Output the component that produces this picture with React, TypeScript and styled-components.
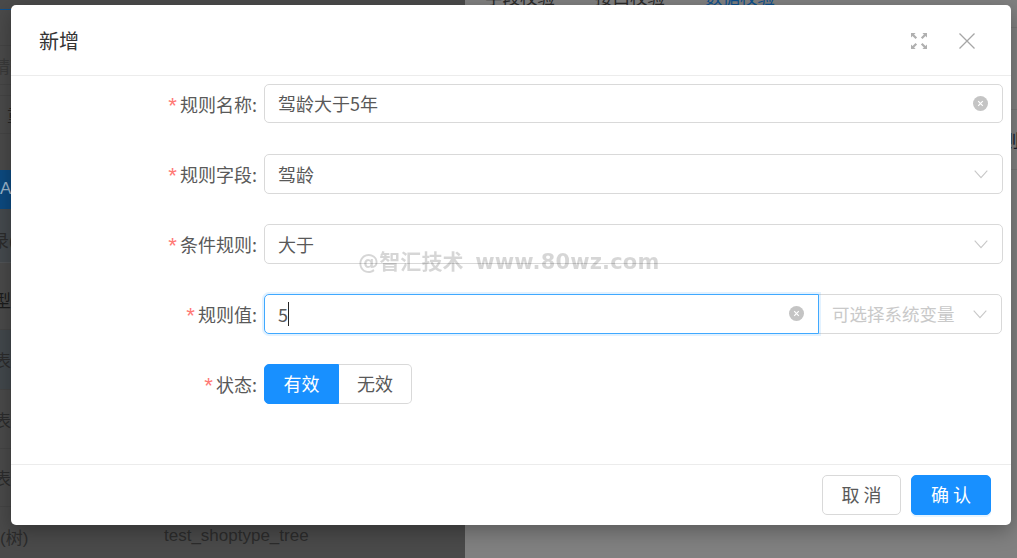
import React from "react";
import styled, { createGlobalStyle } from "styled-components";

const Global = createGlobalStyle`
  html, body { margin: 0; padding: 0; width: 1017px; height: 558px; overflow: hidden; }
  body { font-family: "Noto Sans CJK SC", "Liberation Sans", sans-serif; }
  #root { width: 1017px; height: 558px; }
`;

const Page = styled.div`
  position: relative;
  display: flex;
  width: 1017px;
  height: 558px;
  overflow: hidden;
`;

const LeftPanel = styled.div`
  width: 465px;
  flex: none;
  display: flex;
  flex-direction: column;
  background: #4a4a4a;
  overflow: hidden;
`;

const RightPanel = styled.div`
  flex: 1;
  background: #808080;
  display: flex;
  flex-direction: column;
  overflow: hidden;
`;

const BackRow = styled.div<{ $h: number; $bg?: string; $line?: string; $color?: string; $top?: number }>`
  height: ${(p) => p.$h}px;
  flex: none;
  box-sizing: border-box;
  display: flex;
  align-items: center;
  white-space: nowrap;
  font-family: "Liberation Sans", "Noto Sans CJK SC", sans-serif;
  font-size: 17px;
  background: ${(p) => p.$bg || "transparent"};
  border-bottom: 1px solid ${(p) => p.$line || "#444444"};
  color: ${(p) => p.$color || "#262626"};
  padding-top: ${(p) => p.$top || 0}px;
`;

const BackCell = styled.span<{ $w?: number; $x?: number }>`
  display: block;
  flex: none;
  width: ${(p) => p.$w || 83}px;
  margin-left: ${(p) => p.$x || 0}px;
`;

const TabStrip = styled.div`
  display: flex;
  gap: 40px;
  flex: none;
  box-sizing: border-box;
  padding-left: 20px;
  border-bottom: 1px solid #777777;
  font-size: 17.5px;
  line-height: 17.5px;
  margin-top: -12px;
  height: 40px;
`;

const BackTab = styled.span<{ $active?: boolean }>`
  color: ${(p) => (p.$active ? "#0c4f8c" : "#2a2a2a")};
`;

const RightRow = styled.div<{ $h: number }>`
  height: ${(p) => p.$h}px;
  flex: none;
  box-sizing: border-box;
  border-bottom: 1px solid #777777;
  display: flex;
  align-items: center;
  font-size: 17.5px;
  padding-left: 537px;
  color: #14182a;
  white-space: nowrap;
`;

const Modal = styled.div`
  position: absolute;
  left: 11px;
  top: 5px;
  width: 1000px;
  height: 520px;
  background: #fff;
  border-radius: 5px;
  box-shadow: 0 6px 20px rgba(0, 0, 0, 0.3);
  display: flex;
  flex-direction: column;
`;

const Header = styled.div`
  height: 71px;
  flex: none;
  box-sizing: border-box;
  border-bottom: 1px solid #ececec;
  display: flex;
  align-items: center;
  justify-content: space-between;
  padding: 2px 36px 0 28px;
`;

const Title = styled.div`
  font-size: 20px;
  line-height: 28px;
  color: #333333;
`;

const HeaderIcons = styled.div`
  display: flex;
  gap: 32px;
  align-items: center;
`;

const Body = styled.div`
  flex: 1;
  display: flex;
  flex-direction: column;
  gap: 30px;
  padding: 8px 8px 0 0;
`;

const Row = styled.div`
  display: flex;
  align-items: flex-start;
  height: 40px;
`;

const Label = styled.label`
  width: 253px;
  height: 40px;
  flex: none;
  box-sizing: border-box;
  padding-right: 7px;
  display: flex;
  justify-content: flex-end;
  align-items: center;
  font-size: 18px;
  line-height: 24px;
  color: #595959;
  white-space: nowrap;
`;

const Star = styled.span`
  color: #ff7875;
  font-family: "Liberation Mono", monospace;
  font-size: 22px;
  line-height: 24px;
  width: 11px;
  margin-right: 3px;
  text-align: center;
  position: relative;
  top: 5px;
`;

const Field = styled.div<{ $focus?: boolean; $part?: "left" | "right"; $short?: boolean }>`
  flex: ${(p) => (p.$part === "right" ? "none" : "1")};
  width: ${(p) => (p.$part === "right" ? "184px" : "auto")};
  margin-left: ${(p) => (p.$part === "right" ? "-1px" : "0")};
  margin-right: ${(p) => (p.$part === "right" ? "1px" : "0")};
  height: ${(p) => (p.$short ? 39 : 40)}px;
  box-sizing: border-box;
  border: 1px solid ${(p) => (p.$focus ? "#40a9ff" : "#d9d9d9")};
  border-radius: ${(p) => (p.$part === "left" ? "5px 0 0 5px" : p.$part === "right" ? "0 5px 5px 0" : "5px")};
  box-shadow: ${(p) => (p.$focus ? "0 0 0 2px rgba(24, 144, 255, 0.12)" : "none")};
  position: relative;
  z-index: ${(p) => (p.$focus ? 1 : 0)};
  display: flex;
  align-items: center;
  justify-content: space-between;
  padding: 0 14px 1px 13px;
  font-size: 18px;
  color: #595959;
  background: #fff;
`;

const FieldValue = styled.span`
  display: flex;
  align-items: center;
  white-space: nowrap;
`;

const Placeholder = styled.span`
  color: #c9c9c9;
  font-size: 17.5px;
  white-space: nowrap;
`;

const Caret = styled.span`
  display: block;
  width: 1px;
  height: 24px;
  background: #262626;
`;

const Radios = styled.div`
  display: flex;
`;

const Radio = styled.div<{ $on?: boolean; $first?: boolean }>`
  height: 40px;
  box-sizing: border-box;
  width: ${(p) => (p.$first ? 75 : 73)}px;
  display: flex;
  align-items: center;
  justify-content: center;
  padding-bottom: 2px;
  font-size: 18px;
  border: 1px solid ${(p) => (p.$on ? "#1890ff" : "#d9d9d9")};
  border-left-width: ${(p) => (p.$first ? 1 : 0)}px;
  border-radius: ${(p) => (p.$first ? "5px 0 0 5px" : "0 5px 5px 0")};
  background: ${(p) => (p.$on ? "#1890ff" : "#fff")};
  color: ${(p) => (p.$on ? "#fff" : "#595959")};
`;

const Footer = styled.div`
  height: 61px;
  flex: none;
  box-sizing: border-box;
  border-top: 1px solid #ececec;
  display: flex;
  justify-content: flex-end;
  align-items: center;
  gap: 10px;
  padding: 0 20px;
`;

const Button = styled.button<{ $primary?: boolean }>`
  width: ${(p) => (p.$primary ? 80 : 79)}px;
  height: 40px;
  box-sizing: border-box;
  border-radius: 5px;
  border: 1px solid ${(p) => (p.$primary ? "#1890ff" : "#d9d9d9")};
  background: ${(p) => (p.$primary ? "#1890ff" : "#fff")};
  color: ${(p) => (p.$primary ? "#fff" : "#595959")};
  font-family: inherit;
  font-size: 18px;
  letter-spacing: 4px;
  padding: 0 0 3px 4px;
  box-shadow: ${(p) => (p.$primary ? "0 2px 0 rgba(5, 145, 255, 0.1)" : "none")};
`;

const Watermark = styled.div`
  position: absolute;
  left: 358px;
  top: 247px;
  font-family: "DejaVu Sans", "Noto Sans CJK SC", sans-serif;
  font-size: 21px;
  line-height: 30px;
  font-weight: 700;
  letter-spacing: 0.15px;
  word-spacing: 4px;
  color: rgba(0, 0, 0, 0.16);
  white-space: nowrap;
  filter: blur(0.5px);
  pointer-events: none;
`;

const ChevronWrap = styled.span`
  display: flex;
  margin-top: 1px;
`;

const Clear = () => (
  <svg width="15" height="15" viewBox="0 0 15 15">
    <circle cx="7.5" cy="7.5" r="7.5" fill="#c4c4c4" />
    <path d="M5.2 5.2l4.6 4.6M9.8 5.2l-4.6 4.6" stroke="#fff" strokeWidth="1.2" />
  </svg>
);

const Chevron = () => (
  <ChevronWrap>
    <svg width="14" height="9" viewBox="0 0 14 9" fill="none">
      <path d="M.7.7l6.3 7 6.3-7" stroke="#c8c8c8" strokeWidth="1.1" />
    </svg>
  </ChevronWrap>
);

const ExpandIcon = () => (
  <svg width="16" height="16" viewBox="0 0 16 16" fill="#b0b0b0">
    <path d="M0 0h4.6L3.1 1.5l3 3-1.6 1.6-3-3L0 4.6zM16 0v4.6l-1.5-1.5-3 3-1.6-1.6 3-3L11.4 0zM0 16v-4.6l1.5 1.5 3-3 1.6 1.6-3 3 1.5 1.5zM16 16h-4.6l1.5-1.5-3-3 1.6-1.6 3 3 1.5-1.5z" />
  </svg>
);

const CloseIcon = () => (
  <svg width="16" height="16" viewBox="0 0 16 16" fill="none">
    <path d="M.5.5l15 15M15.5.5l-15 15" stroke="#a6a6a6" strokeWidth="1.3" />
  </svg>
);

export default function App() {
  return (
    <Page>
      <Global />
      <LeftPanel>
        <BackRow $h={10} $line="#0c4f8c" />
        <BackRow $h={36} />
        <BackRow $h={39} $color="#3a3a3a">
          <BackCell $x={-7}>请输入</BackCell>
        </BackRow>
        <BackRow $h={11} />
        <BackRow $h={38}>
          <BackCell $x={7}>重置</BackCell>
        </BackRow>
        <BackRow $h={36} $line="#4a4a4a" />
        <BackRow $h={39} $bg="#0c4a80" $color="#9db6cc" $line="#0c4a80">
          <BackCell>ALL</BackCell>
        </BackRow>
        <BackRow $h={54} $bg="#454a4e" $line="#505356" $color="#2c2c2c" $top={7}>
          <BackCell $x={-8}>录(</BackCell>
        </BackRow>
        <BackRow $h={67} $color="#1c1c1c" $top={7}>
          <BackCell $x={-6}>型</BackCell>
        </BackRow>
        <BackRow $h={60} $bg="#42484c" $color="#2c2c2c">
          <BackCell $x={-6}>表</BackCell>
        </BackRow>
        <BackRow $h={59} $color="#2c2c2c">
          <BackCell $x={-6}>表</BackCell>
        </BackRow>
        <BackRow $h={58} $color="#2c2c2c">
          <BackCell $x={-6}>表</BackCell>
        </BackRow>
        <BackRow $h={51} $color="#2c2c2c" $line="#4a4a4a" $top={8}>
          <BackCell $w={164}>(树)</BackCell>
          <span>test_shoptype_tree</span>
        </BackRow>
      </LeftPanel>
      <RightPanel>
        <TabStrip>
          <BackTab>字段校验</BackTab>
          <BackTab>接口校验</BackTab>
          <BackTab $active>数据校验</BackTab>
        </TabStrip>
        <RightRow $h={82} />
        <RightRow $h={60}>则</RightRow>
      </RightPanel>
      <Modal>
        <Header>
          <Title>新增</Title>
          <HeaderIcons>
            <ExpandIcon />
            <CloseIcon />
          </HeaderIcons>
        </Header>
        <Body>
          <Row>
            <Label>
              <Star>*</Star>规则名称:
            </Label>
            <Field $short>
              <FieldValue>驾龄大于5年</FieldValue>
              <Clear />
            </Field>
          </Row>
          <Row>
            <Label>
              <Star>*</Star>规则字段:
            </Label>
            <Field>
              <FieldValue>驾龄</FieldValue>
              <Chevron />
            </Field>
          </Row>
          <Row>
            <Label>
              <Star>*</Star>条件规则:
            </Label>
            <Field>
              <FieldValue>大于</FieldValue>
              <Chevron />
            </Field>
          </Row>
          <Row>
            <Label>
              <Star>*</Star>规则值:
            </Label>
            <Field $focus $part="left">
              <FieldValue>
                5<Caret />
              </FieldValue>
              <Clear />
            </Field>
            <Field $part="right">
              <Placeholder>可选择系统变量</Placeholder>
              <Chevron />
            </Field>
          </Row>
          <Row>
            <Label>
              <Star>*</Star>状态:
            </Label>
            <Radios>
              <Radio $first $on>
                有效
              </Radio>
              <Radio>无效</Radio>
            </Radios>
          </Row>
        </Body>
        <Footer>
          <Button>取消</Button>
          <Button $primary>确认</Button>
        </Footer>
      </Modal>
      <Watermark>@智汇技术 www.80wz.com</Watermark>
    </Page>
  );
}
